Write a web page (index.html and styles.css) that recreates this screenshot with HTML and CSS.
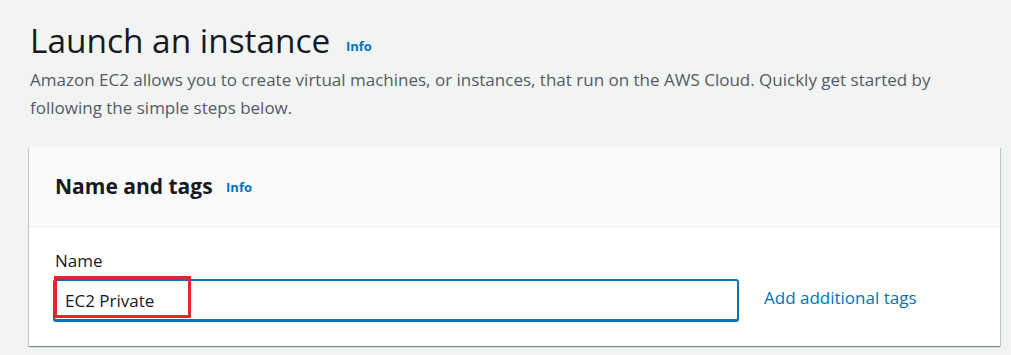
FILE: index.html
```html
<!DOCTYPE html>
<html lang="en">
<head>
  <meta charset="UTF-8">
  <title>Launch an instance</title>
  <link rel="stylesheet" href="styles.css">
</head>
<body>
  <div class="page">
    <div class="page-header">
      <h1>Launch an instance <a href="#" class="info">Info</a></h1>
      <p class="intro">Amazon EC2 allows you to create virtual machines, or instances, that run on the AWS Cloud. Quickly get started by following the simple steps below.</p>
    </div>

    <div class="panel">
      <div class="panel-head">
        <h2>Name and tags <a href="#" class="info">Info</a></h2>
      </div>
      <div class="panel-body">
        <label class="field-label" for="instanceName">Name</label>
        <div class="field-row">
          <div class="input-wrap">
            <input type="text" id="instanceName" class="text-input" value="EC2 Private">
            <span class="highlight"></span>
          </div>
          <a href="#" class="link">Add additional tags</a>
        </div>
      </div>
    </div>
  </div>
</body>
</html>
```

FILE: styles.css
```css
* {
  margin: 0;
  padding: 0;
  box-sizing: border-box;
}

body {
  font-family: 'Open Sans', 'Noto Sans', sans-serif;
  background: #f2f3f3;
  color: #16191f;
  width: 1011px;
  height: 355px;
  overflow: hidden;
}

.page {
  padding: 18px 0 0 30px;
}

h1 {
  font-size: 33.4px;
  font-weight: 400;
  line-height: 44px;
  color: #16191f;
}

.info {
  font-size: 13px;
  font-weight: 700;
  color: #0073bb;
  text-decoration: none;
  margin-left: 7px;
  vertical-align: 2px;
}

.intro {
  font-size: 17px;
  line-height: 28px;
  color: #545b64;
  width: 920px;
  margin-top: -2px;
}

.panel {
  margin: 25px 0 0 -1px;
  width: 971px;
  background: #fff;
  box-shadow: 0 1px 1px 0 rgba(0, 28, 36, 0.3), 1px 1px 1px 0 rgba(0, 28, 36, 0.15), -1px 1px 1px 0 rgba(0, 28, 36, 0.15);
}

.panel-head {
  height: 80px;
  background: #fafafa;
  border-bottom: 1px solid #eaeded;
  padding: 0 26px 2px;
  display: flex;
  align-items: center;
}

h2 {
  font-size: 21px;
  font-weight: 700;
  color: #16191f;
}

.panel-head .info {
  margin-left: 8px;
}

.panel-body {
  padding: 22px 24px 25px 26px;
}

.field-label {
  display: block;
  font-size: 17px;
  line-height: 24px;
  margin-bottom: 6px;
  color: #16191f;
}

.field-row {
  display: flex;
  align-items: center;
  gap: 25px;
  margin-left: -2px;
}

.input-wrap {
  position: relative;
  width: 686px;
}

.text-input {
  width: 100%;
  height: 42px;
  border: 2px solid #0073bb;
  border-radius: 3px;
  padding: 0 10px;
  font-family: inherit;
  font-size: 17px;
  color: #16191f;
  background: #fff;
  box-shadow: 0 1px 0 #0073bb;
  outline: none;
}

.highlight {
  position: absolute;
  left: 1px;
  top: -3px;
  width: 137px;
  height: 42px;
  border: 3px solid #e5262a;
}

.link {
  font-size: 17px;
  color: #0073bb;
  text-decoration: none;
  margin-bottom: 6px;
}
```
